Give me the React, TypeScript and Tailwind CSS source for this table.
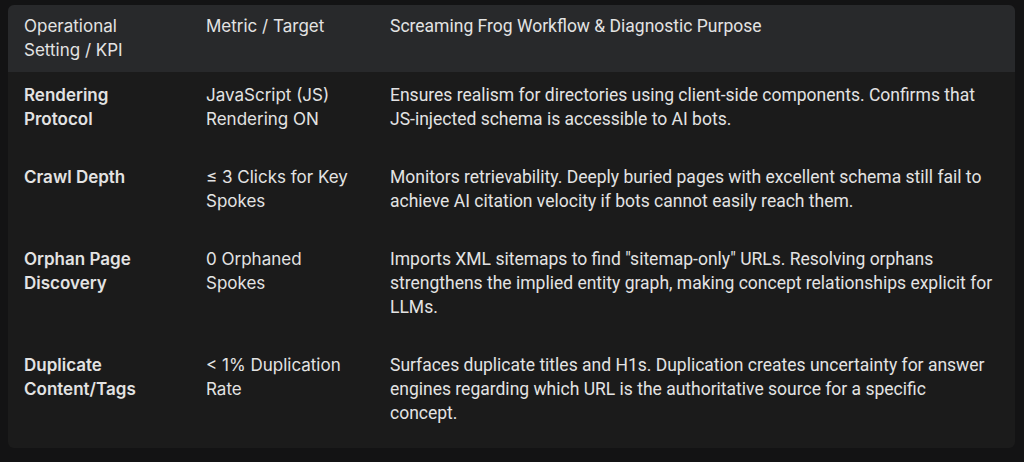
const rows = [
  {
    setting: "Rendering Protocol",
    metric: "JavaScript (JS) Rendering ON",
    purpose:
      "Ensures realism for directories using client-side components. Confirms that JS-injected schema is accessible to AI bots.",
  },
  {
    setting: "Crawl Depth",
    metric: "≤ 3 Clicks for Key Spokes",
    purpose:
      "Monitors retrievability. Deeply buried pages with excellent schema still fail to achieve AI citation velocity if bots cannot easily reach them.",
  },
  {
    setting: "Orphan Page Discovery",
    metric: "0 Orphaned Spokes",
    purpose:
      'Imports XML sitemaps to find "sitemap-only" URLs. Resolving orphans strengthens the implied entity graph, making concept relationships explicit for LLMs.',
  },
  {
    setting: "Duplicate Content/Tags",
    metric: "< 1% Duplication Rate",
    purpose:
      "Surfaces duplicate titles and H1s. Duplication creates uncertainty for answer engines regarding which URL is the authoritative source for a specific concept.",
  },
];

export default function App() {
  return (
    <div className="w-[1024px] h-[462px] bg-[#131314] pt-[5px] pl-2 pr-[9px] font-['Inter',sans-serif] text-[17px] leading-[24px] text-[#e3e3e3]">
      <div className="rounded-md overflow-hidden bg-[#1b1b1b]">
        <div className="grid grid-cols-[182px_184px_1fr] bg-[#28292b] pt-[9px] pb-[10px]">
          <div className="px-4">Operational Setting / KPI</div>
          <div className="px-4">Metric / Target</div>
          <div className="pl-4 pr-5 font-['Roboto',sans-serif] text-[17.5px]">
            Screaming Frog Workflow &amp; Diagnostic Purpose
          </div>
        </div>
        {rows.map((row) => (
          <div
            key={row.setting}
            className="grid grid-cols-[182px_184px_1fr] pt-[11px] pb-[23px]"
          >
            <div className="px-4 font-semibold">{row.setting}</div>
            <div className="px-4">{row.metric}</div>
            <div className="pl-4 pr-5 font-['Roboto',sans-serif] text-[17.5px]">
              {row.purpose}
            </div>
          </div>
        ))}
      </div>
    </div>
  );
}
